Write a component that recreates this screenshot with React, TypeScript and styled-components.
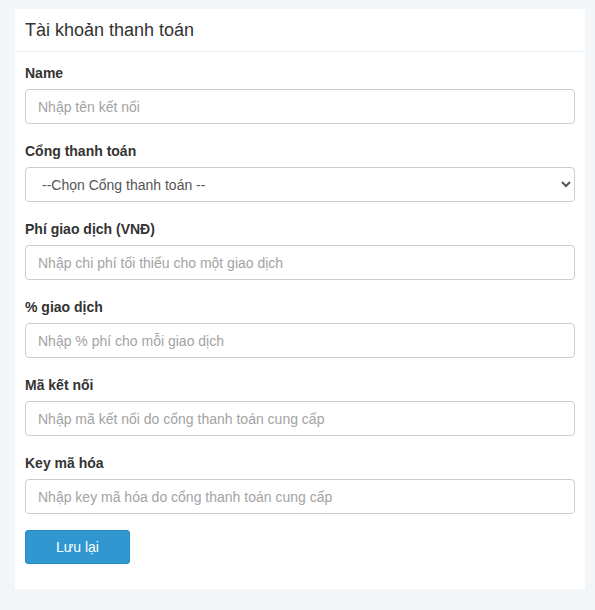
import styled, { createGlobalStyle } from 'styled-components'

const GlobalStyle = createGlobalStyle`
  html, body {
    margin: 0;
    padding: 0;
    background: #f3f6f9;
    font-family: 'Liberation Sans', Arial, sans-serif;
    color: #333;
  }
`

const Page = styled.div`
  padding: 9px 10px 21px 15px;
`

const Card = styled.div`
  width: 570px;
  background: #fff;
`

const CardHeader = styled.div`
  height: 42px;
  padding: 0 10px;
  display: flex;
  align-items: center;
  border-bottom: 1px solid #eef0f3;
  font-size: 18px;
  color: #333;
`

const CardBody = styled.form`
  padding: 11px 10px 25px;
`

const FormGroup = styled.div`
  margin-bottom: 17px;
`

const Label = styled.label`
  display: block;
  font-size: 14px;
  font-weight: bold;
  line-height: 20px;
  height: 20px;
  margin-bottom: 6px;
  color: #333;
`

const Input = styled.input`
  display: block;
  box-sizing: border-box;
  width: 100%;
  height: 35px;
  padding: 0 12px;
  border: 1px solid #ccc;
  border-radius: 4px;
  font-family: inherit;
  font-size: 14px;
  color: #555;
  background: #fff;
  outline: none;

  &::placeholder {
    color: #a3a3a3;
  }
`

const Select = styled.select`
  display: block;
  box-sizing: border-box;
  width: 100%;
  height: 35px;
  padding: 0 12px;
  border: 1px solid #ccc;
  border-radius: 4px;
  font-family: inherit;
  font-size: 14px;
  color: #555;
  background: #fff;
  outline: none;
`

const SaveButton = styled.button`
  display: block;
  margin-top: -1px;
  width: 105px;
  height: 34px;
  border: 1px solid #2a88c2;
  border-radius: 3px;
  background: #3097d1;
  color: #fff;
  font-family: inherit;
  font-size: 14px;
  cursor: pointer;
`

const fields = [
  { label: 'Phí giao dịch (VNĐ)', placeholder: 'Nhập chi phí tối thiểu cho một giao dịch' },
  { label: '% giao dịch', placeholder: 'Nhập % phí cho mỗi giao dịch' },
  { label: 'Mã kết nối', placeholder: 'Nhập mã kết nối do cổng thanh toán cung cấp' },
  { label: 'Key mã hóa', placeholder: 'Nhập key mã hóa do cổng thanh toán cung cấp' },
]

export default function App() {
  return (
    <>
      <GlobalStyle />
      <Page>
        <Card>
          <CardHeader>Tài khoản thanh toán</CardHeader>
          <CardBody onSubmit={(e) => e.preventDefault()}>
            <FormGroup>
              <Label>Name</Label>
              <Input placeholder="Nhập tên kết nối" />
            </FormGroup>
            <FormGroup>
              <Label>Cổng thanh toán</Label>
              <Select defaultValue="">
                <option value="">--Chọn Cổng thanh toán --</option>
              </Select>
            </FormGroup>
            {fields.map((f) => (
              <FormGroup key={f.label}>
                <Label>{f.label}</Label>
                <Input placeholder={f.placeholder} />
              </FormGroup>
            ))}
            <SaveButton type="submit">Lưu lại</SaveButton>
          </CardBody>
        </Card>
      </Page>
    </>
  )
}
